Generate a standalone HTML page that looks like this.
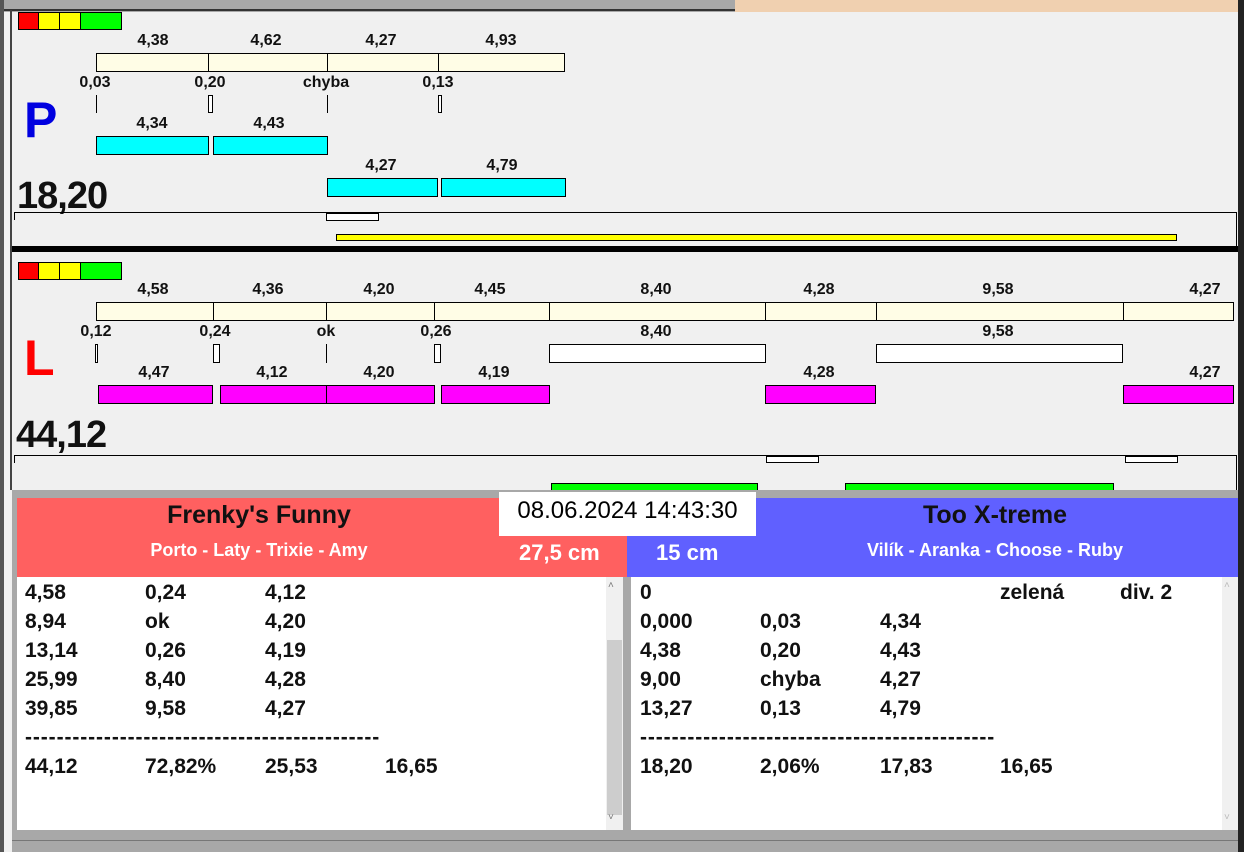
<!DOCTYPE html>
<html><head><meta charset="utf-8"><style>
*{margin:0;padding:0;box-sizing:border-box}
body{width:1244px;height:852px;background:#f0f0f0;position:relative;overflow:hidden;font-family:"Liberation Sans",Arial,sans-serif;font-weight:bold}
div{position:absolute}
.b{border:1px solid #000}
.cr{background:#fffde6}
.cy{background:#00ffff}
.mg{background:#ff00ff}
.w{background:#fff}
.t{font-size:16px;width:80px;text-align:center;color:#111;line-height:17px}
.r{font-size:21px;line-height:24px;color:#111}
.d{letter-spacing:0.9px}
</style></head><body>
<!-- top strip -->
<div style="left:0;top:0;width:735px;height:12px;background:#a8a8a8"></div>
<div style="left:0;top:9px;width:735px;height:2px;background:#333"></div>
<div style="left:735px;top:0;width:505px;height:12px;background:#f0d0b0"></div>
<div style="left:0;top:0;width:4px;height:852px;background:#555"></div>
<div style="left:10px;top:10px;width:2px;height:480px;background:#444"></div>
<div style="left:1238px;top:0;width:6px;height:852px;background:#222"></div>

<!-- P panel -->
<div style="left:18px;top:12px;width:21px;height:18px;background:#f00" class="b"></div>
<div style="left:38px;top:12px;width:22px;height:18px;background:#ff0" class="b"></div>
<div style="left:59px;top:12px;width:22px;height:18px;background:#ff0" class="b"></div>
<div style="left:80px;top:12px;width:42px;height:18px;background:#0f0" class="b"></div>

<div class="t" style="left:113px;top:32px">4,38</div>
<div class="t" style="left:226px;top:32px">4,62</div>
<div class="t" style="left:341px;top:32px">4,27</div>
<div class="t" style="left:461px;top:32px">4,93</div>
<div class="b cr" style="left:96px;top:53px;width:113px;height:19px"></div>
<div class="b cr" style="left:208px;top:53px;width:120px;height:19px"></div>
<div class="b cr" style="left:327px;top:53px;width:112px;height:19px"></div>
<div class="b cr" style="left:438px;top:53px;width:127px;height:19px"></div>
<div class="t" style="left:55px;top:74px">0,03</div>
<div class="t" style="left:170px;top:74px">0,20</div>
<div class="t" style="left:286px;top:74px">chyba</div>
<div class="t" style="left:398px;top:74px">0,13</div>
<div style="left:96px;top:95px;width:1px;height:18px;background:#000"></div>
<div class="b w" style="left:208px;top:95px;width:5px;height:18px"></div>
<div style="left:327px;top:95px;width:1px;height:18px;background:#000"></div>
<div class="b w" style="left:438px;top:95px;width:4px;height:18px"></div>
<div style="left:24px;top:92px;font-size:50px;color:#0000e0;line-height:56px">P</div>
<div class="t" style="left:112px;top:115px">4,34</div>
<div class="t" style="left:229px;top:115px">4,43</div>
<div class="b cy" style="left:96px;top:136px;width:113px;height:19px"></div>
<div class="b cy" style="left:213px;top:136px;width:115px;height:19px"></div>
<div class="t" style="left:341px;top:157px">4,27</div>
<div class="t" style="left:462px;top:157px">4,79</div>
<div class="b cy" style="left:327px;top:178px;width:111px;height:19px"></div>
<div class="b cy" style="left:441px;top:178px;width:125px;height:19px"></div>
<div style="left:17px;top:175px;font-size:38px;line-height:42px;color:#111;letter-spacing:-1px">18,20</div>
<div style="left:14px;top:212px;width:1223px;height:1px;background:#000"></div>
<div style="left:14px;top:212px;width:1px;height:8px;background:#000"></div>
<div style="left:1236px;top:212px;width:1px;height:34px;background:#000"></div>
<div class="b w" style="left:326px;top:213px;width:53px;height:8px"></div>
<div class="b" style="left:336px;top:234px;width:841px;height:7px;background:#ff0"></div>
<div style="left:12px;top:246px;width:1226px;height:6px;background:#000"></div>

<!-- L panel -->
<div style="left:18px;top:262px;width:21px;height:18px;background:#f00" class="b"></div>
<div style="left:38px;top:262px;width:22px;height:18px;background:#ff0" class="b"></div>
<div style="left:59px;top:262px;width:22px;height:18px;background:#ff0" class="b"></div>
<div style="left:80px;top:262px;width:42px;height:18px;background:#0f0" class="b"></div>
<div class="t" style="left:113px;top:281px">4,58</div>
<div class="t" style="left:228px;top:281px">4,36</div>
<div class="t" style="left:339px;top:281px">4,20</div>
<div class="t" style="left:450px;top:281px">4,45</div>
<div class="t" style="left:616px;top:281px">8,40</div>
<div class="t" style="left:779px;top:281px">4,28</div>
<div class="t" style="left:958px;top:281px">9,58</div>
<div class="t" style="left:1165px;top:281px">4,27</div>
<div class="b cr" style="left:96px;top:302px;width:118px;height:19px"></div>
<div class="b cr" style="left:213px;top:302px;width:114px;height:19px"></div>
<div class="b cr" style="left:326px;top:302px;width:109px;height:19px"></div>
<div class="b cr" style="left:434px;top:302px;width:116px;height:19px"></div>
<div class="b cr" style="left:549px;top:302px;width:217px;height:19px"></div>
<div class="b cr" style="left:765px;top:302px;width:112px;height:19px"></div>
<div class="b cr" style="left:876px;top:302px;width:248px;height:19px"></div>
<div class="b cr" style="left:1123px;top:302px;width:111px;height:19px"></div>
<div class="t" style="left:56px;top:323px">0,12</div>
<div class="t" style="left:175px;top:323px">0,24</div>
<div class="t" style="left:286px;top:323px">ok</div>
<div class="t" style="left:396px;top:323px">0,26</div>
<div class="t" style="left:616px;top:323px">8,40</div>
<div class="t" style="left:958px;top:323px">9,58</div>
<div class="b w" style="left:95px;top:344px;width:3px;height:19px"></div>
<div class="b w" style="left:213px;top:344px;width:7px;height:19px"></div>
<div style="left:326px;top:344px;width:1px;height:19px;background:#000"></div>
<div class="b w" style="left:434px;top:344px;width:7px;height:19px"></div>
<div class="b w" style="left:549px;top:344px;width:217px;height:19px"></div>
<div class="b w" style="left:876px;top:344px;width:247px;height:19px"></div>
<div style="left:24px;top:330px;font-size:50px;color:#f00;line-height:56px">L</div>
<div class="t" style="left:114px;top:364px">4,47</div>
<div class="t" style="left:232px;top:364px">4,12</div>
<div class="t" style="left:339px;top:364px">4,20</div>
<div class="t" style="left:454px;top:364px">4,19</div>
<div class="t" style="left:779px;top:364px">4,28</div>
<div class="t" style="left:1165px;top:364px">4,27</div>
<div class="b mg" style="left:98px;top:385px;width:115px;height:19px"></div>
<div class="b mg" style="left:220px;top:385px;width:107px;height:19px"></div>
<div class="b mg" style="left:326px;top:385px;width:109px;height:19px"></div>
<div class="b mg" style="left:441px;top:385px;width:109px;height:19px"></div>
<div class="b mg" style="left:765px;top:385px;width:111px;height:19px"></div>
<div class="b mg" style="left:1123px;top:385px;width:111px;height:19px"></div>
<div style="left:16px;top:414px;font-size:38px;line-height:42px;color:#111;letter-spacing:-1px">44,12</div>
<div style="left:14px;top:455px;width:1223px;height:1px;background:#000"></div>
<div style="left:14px;top:455px;width:1px;height:8px;background:#000"></div>
<div style="left:1236px;top:455px;width:1px;height:35px;background:#000"></div>
<div class="b w" style="left:766px;top:456px;width:53px;height:7px"></div>
<div class="b w" style="left:1125px;top:456px;width:53px;height:7px"></div>
<div class="b" style="left:551px;top:483px;width:207px;height:8px;background:#0f0"></div>
<div class="b" style="left:845px;top:483px;width:269px;height:8px;background:#0f0"></div>
<div style="left:12px;top:490px;width:1226px;height:8px;background:#a8a8a8"></div>

<!-- bottom headers -->
<div style="left:12px;top:498px;width:5px;height:354px;background:#a8a8a8"></div>
<div style="left:17px;top:498px;width:610px;height:79px;background:#ff6060"></div>
<div style="left:627px;top:498px;width:611px;height:79px;background:#6060ff"></div>
<div style="left:17px;top:500px;width:484px;text-align:center;font-size:25px;line-height:30px;color:#111">Frenky's Funny</div>
<div style="left:17px;top:539px;width:484px;text-align:center;font-size:18px;line-height:22px;color:#fff">Porto - Laty - Trixie - Amy</div>
<div style="left:519px;top:540px;font-size:22px;line-height:26px;color:#fff">27,5 cm</div>
<div style="left:656px;top:540px;font-size:22px;line-height:26px;color:#fff">15 cm</div>
<div style="left:756px;top:500px;width:478px;text-align:center;font-size:25px;line-height:30px;color:#111">Too X-treme</div>
<div style="left:756px;top:539px;width:478px;text-align:center;font-size:18px;line-height:22px;color:#fff">Vilík - Aranka - Choose - Ruby</div>
<div style="left:499px;top:492px;width:257px;height:44px;background:#fff;font-weight:normal;font-size:24px;line-height:38px;text-align:center;color:#000">08.06.2024 14:43:30</div>

<!-- lists -->
<div style="left:17px;top:577px;width:589px;height:253px;background:#fff"></div>
<div style="left:606px;top:577px;width:17px;height:253px;background:#f0f0f0"></div>
<div style="left:607px;top:640px;width:15px;height:175px;background:#cdcdcd"></div>
<div style="left:608px;top:580px;font-size:10px;color:#777;font-weight:normal">&#708;</div>
<div style="left:608px;top:812px;font-size:10px;color:#777;font-weight:normal">&#709;</div>
<div style="left:623px;top:577px;width:8px;height:253px;background:#a8a8a8"></div>
<div style="left:631px;top:577px;width:591px;height:253px;background:#fff"></div>
<div style="left:1222px;top:577px;width:16px;height:253px;background:#f0f0f0"></div>
<div style="left:1224px;top:580px;font-size:10px;color:#bbb;font-weight:normal">&#708;</div>
<div style="left:1224px;top:812px;font-size:10px;color:#bbb;font-weight:normal">&#709;</div>
<div style="left:12px;top:830px;width:1226px;height:22px;background:#a8a8a8"></div>
<div style="left:12px;top:840px;width:1226px;height:1px;background:#777"></div>

<div class="r" style="left:25px;top:581px">4,58</div><div class="r" style="left:145px;top:581px">0,24</div><div class="r" style="left:265px;top:581px">4,12</div>
<div class="r" style="left:25px;top:610px">8,94</div><div class="r" style="left:145px;top:610px">ok</div><div class="r" style="left:265px;top:610px">4,20</div>
<div class="r" style="left:25px;top:639px">13,14</div><div class="r" style="left:145px;top:639px">0,26</div><div class="r" style="left:265px;top:639px">4,19</div>
<div class="r" style="left:25px;top:668px">25,99</div><div class="r" style="left:145px;top:668px">8,40</div><div class="r" style="left:265px;top:668px">4,28</div>
<div class="r" style="left:25px;top:697px">39,85</div><div class="r" style="left:145px;top:697px">9,58</div><div class="r" style="left:265px;top:697px">4,27</div>
<div class="r d" style="left:25px;top:726px">---------------------------------------------</div>
<div class="r" style="left:25px;top:755px">44,12</div><div class="r" style="left:145px;top:755px">72,82%</div><div class="r" style="left:265px;top:755px">25,53</div><div class="r" style="left:385px;top:755px">16,65</div>

<div class="r" style="left:640px;top:581px">0</div><div class="r" style="left:1000px;top:581px">zelená</div><div class="r" style="left:1120px;top:581px">div. 2</div>
<div class="r" style="left:640px;top:610px">0,000</div><div class="r" style="left:760px;top:610px">0,03</div><div class="r" style="left:880px;top:610px">4,34</div>
<div class="r" style="left:640px;top:639px">4,38</div><div class="r" style="left:760px;top:639px">0,20</div><div class="r" style="left:880px;top:639px">4,43</div>
<div class="r" style="left:640px;top:668px">9,00</div><div class="r" style="left:760px;top:668px">chyba</div><div class="r" style="left:880px;top:668px">4,27</div>
<div class="r" style="left:640px;top:697px">13,27</div><div class="r" style="left:760px;top:697px">0,13</div><div class="r" style="left:880px;top:697px">4,79</div>
<div class="r d" style="left:640px;top:726px">---------------------------------------------</div>
<div class="r" style="left:640px;top:755px">18,20</div><div class="r" style="left:760px;top:755px">2,06%</div><div class="r" style="left:880px;top:755px">17,83</div><div class="r" style="left:1000px;top:755px">16,65</div>
</body></html>
